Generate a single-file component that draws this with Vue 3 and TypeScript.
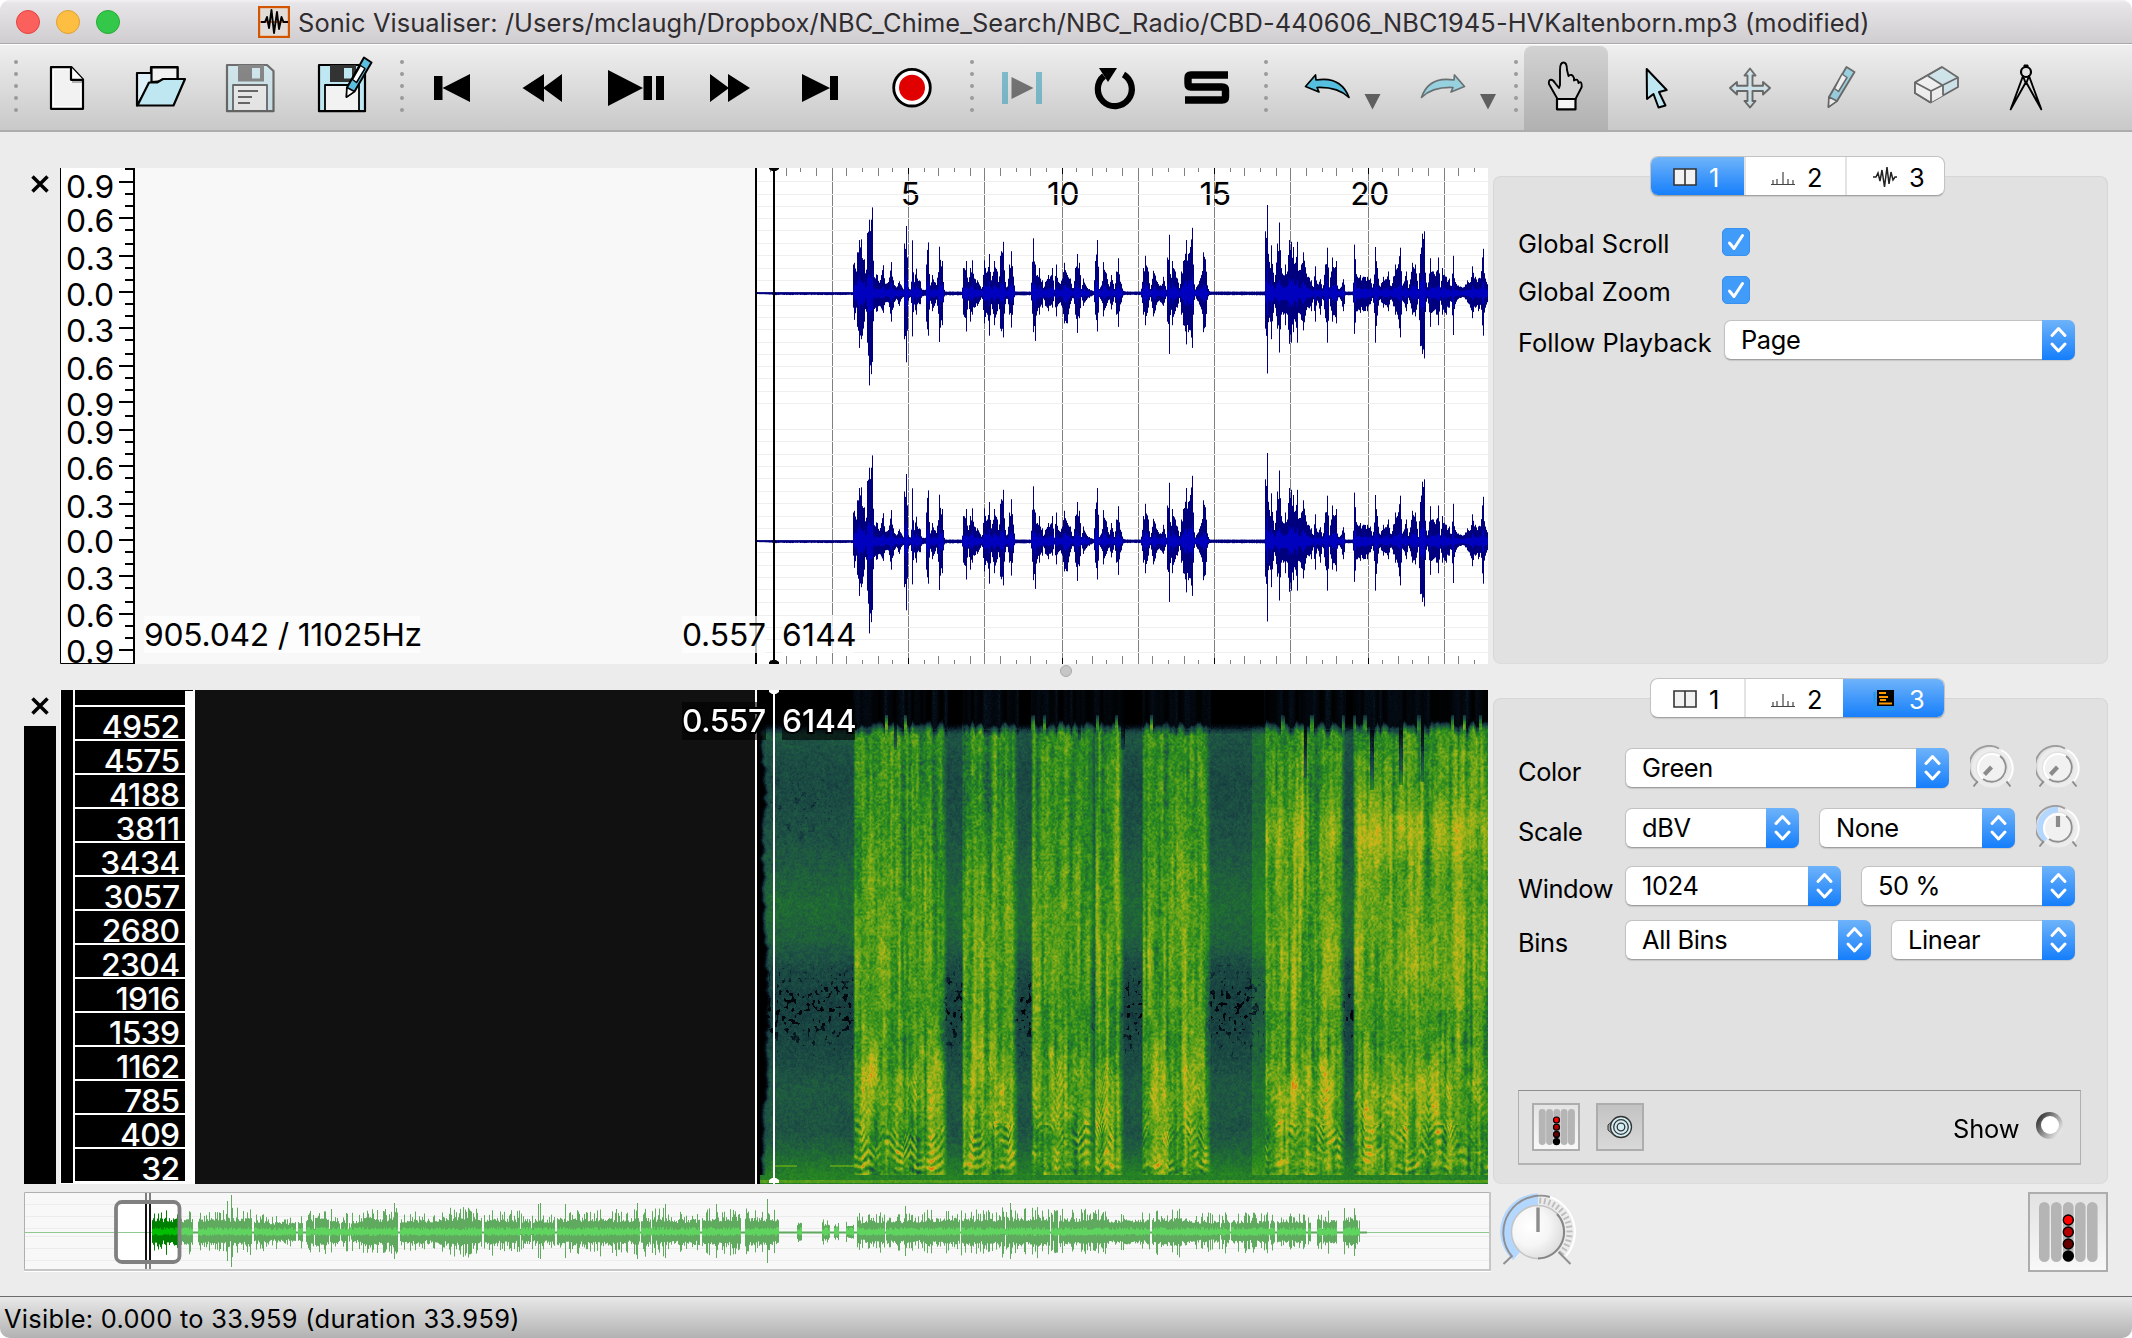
<script setup lang="ts">
import { onMounted, ref } from 'vue'

interface Shape { d: string; fill?: string; stroke?: string; w?: number }
interface Tool { id: string; x: number; w: number; active?: boolean; dim?: boolean; shapes: Shape[] }

function rng(seed: number) {
  let s = seed >>> 0
  return () => {
    s = (s + 0x6d2b79f5) >>> 0
    let t = s
    t = Math.imul(t ^ (t >>> 15), t | 1)
    t ^= t + Math.imul(t ^ (t >>> 7), t | 61)
    return ((t ^ (t >>> 14)) >>> 0) / 4294967296
  }
}

const dots = (x: number): Shape => ({
  d: [62, 74, 86, 98, 110].map(y => `M${x - 2} ${y}a2 2 0 1 0 4 0a2 2 0 1 0 -4 0`).join(''),
  fill: '#9a9a9a',
})
const K = '#000'
const tri = (x: number): Shape => ({ d: `M${x} 94h16l-8 15.5z`, fill: '#5f5f5f' })

const tools: Tool[] = [
  { id: 'grip1', x: 0, w: 32, shapes: [dots(16)] },
  { id: 'new', x: 32, w: 84, shapes: [
    { d: 'M51 67.2H71.5L83 79.5V108.8H51z', fill: '#fff', stroke: K, w: 2.2 },
    { d: 'M54 70H70V82H80V106H54z', fill: '#f2f2f2' },
    { d: 'M71 67V79.8H83', fill: '#fff', stroke: K, w: 2.2 },
    { d: 'M72 82h10', stroke: '#999', w: 1.5 } ] },
  { id: 'open', x: 116, w: 88, shapes: [
    { d: 'M137 105.5V73H151V67H177.5V80L160 84L145 92z', fill: '#dff1f8', stroke: K, w: 2.2 },
    { d: 'M151.5 82V67.4H177.5V80z', fill: '#f2f2f2', stroke: K, w: 2.2 },
    { d: 'M137.5 105.5L149 82.5H157L163 79H185L173.5 105.5z', fill: '#bfe7f2', stroke: K, w: 2.2 } ] },
  { id: 'save', x: 204, w: 92, dim: true, shapes: [
    { d: 'M227 65H267L273.5 71V111.2H227z', fill: '#bfe7f2', stroke: K, w: 2.2 },
    { d: 'M238 65H264V81.5H238z', fill: '#333' },
    { d: 'M252 68H260V78.5H252z', fill: '#bfe7f2' },
    { d: 'M233 111V85H267V111z', fill: '#f2f2f2', stroke: K, w: 1.8 },
    { d: 'M238 91H258M238 97H252M238 103H250', stroke: K, w: 2 } ] },
  { id: 'saveas', x: 296, w: 90, shapes: [
    { d: 'M319 65H365V111.2H319z', fill: '#bfe7f2', stroke: K, w: 2.2 },
    { d: 'M330 65H356V82H330z', fill: '#333' },
    { d: 'M344 68H352V78.5H344z', fill: '#bfe7f2' },
    { d: 'M325 111V85H359V111z', fill: '#f2f2f2', stroke: K, w: 1.8 },
    { d: 'M364 57.5L371.5 62.5L354.5 91.5L346.5 97L347 87.5z', fill: '#5bc0de', stroke: K, w: 2 },
    { d: 'M347 87.5L354.5 91.5L346.5 97z', fill: '#fff', stroke: K, w: 1.5 },
    { d: 'M360.5 65.5L365 68.5L356.5 82.5L352.5 79.5z', fill: '#fff', stroke: K, w: 1.5 } ] },
  { id: 'grip2', x: 386, w: 20, shapes: [dots(402)] },
  { id: 'start', x: 406, w: 90, shapes: [{ d: 'M434 76h8.5v24h-8.5zM470 74V102L442.5 88z', fill: K }] },
  { id: 'rew', x: 496, w: 92, shapes: [{ d: 'M544 74V102L522.5 88zM562 74V102L543 88z', fill: K }] },
  { id: 'play', x: 588, w: 98, shapes: [{ d: 'M608 70V106L643 88zM643.5 76h8.5v24h-8.5zM656 76h8v24h-8z', fill: K }] },
  { id: 'ffwd', x: 686, w: 90, shapes: [{ d: 'M710 74V102L729 88zM728 74V102L750 88z', fill: K }] },
  { id: 'end', x: 776, w: 90, shapes: [{ d: 'M802 74V102L830 88zM830 76h8v24h-8z', fill: K }] },
  { id: 'record', x: 866, w: 90, shapes: [
    { d: 'M893.7 87.7a18.3 18.3 0 1 0 36.6 0a18.3 18.3 0 1 0 -36.6 0', fill: '#fff', stroke: K, w: 2.8 },
    { d: 'M899 87.7a13 13 0 1 0 26 0a13 13 0 1 0 -26 0', fill: '#e10000' } ] },
  { id: 'grip3', x: 956, w: 24, shapes: [dots(972)] },
  { id: 'playsel', x: 980, w: 86, dim: true, shapes: [
    { d: 'M1002 72h6v32h-6zM1036 72h6v32h-6z', fill: '#2596b4' },
    { d: 'M1011.5 77V99L1033.5 88z', fill: '#111' } ] },
  { id: 'loop', x: 1066, w: 96, shapes: [
    { d: 'M1104 76A17 17 0 1 0 1123.5 74.5', stroke: K, w: 6.2 },
    { d: 'M1099 68H1117L1108 82z', fill: K } ] },
  { id: 'solo', x: 1162, w: 88, shapes: [
    { d: 'M1228 75H1191Q1188 75 1188 78V83.5Q1188 87 1191 87H1222Q1225.500 87 1225.500 90V97Q1225.500 100 1222 100H1185', stroke: K, w: 7.4 } ] },
  { id: 'grip4', x: 1250, w: 24, shapes: [dots(1266)] },
  { id: 'undo', x: 1274, w: 124, shapes: [
    { d: 'M1305.500 86.500L1315.500 75L1316 80C1334 77 1344 84 1349 97.500C1340 89 1330 87 1317 87.500L1319 92z', fill: '#56bfdf', stroke: K, w: 1.7 }, tri(1364.5) ] },
  { id: 'redo', x: 1398, w: 102, shapes: [
    { d: 'M1464.500 86.500L1454.500 75L1454 80C1436 77 1426 84 1421.500 97.500C1430 89 1440 87 1453 87.500L1451 92z', fill: '#97d0df', stroke: '#6a7173', w: 1.7 }, tri(1480) ] },
  { id: 'grip5', x: 1500, w: 24, shapes: [dots(1516)] },
  { id: 'navigate', x: 1524, w: 84, active: true, shapes: [
    { d: 'M1560 85V70C1560 60 1567 60 1567 70L1568.500 76Q1572 73 1574 78V80.500Q1578 78 1578.500 83Q1582 80 1581.700 87L1575.500 99H1557.500L1549 84C1548 78.500 1552.500 78.500 1555 83L1559 88z', fill: '#d3d3d3', stroke: K, w: 1.9 },
    { d: 'M1557 99H1575.500V109.300H1557z', fill: '#f4f4f4', stroke: K, w: 2.2 } ] },
  { id: 'select', x: 1608, w: 94, shapes: [
    { d: 'M1646.700 69L1666.700 90L1659 92L1665.500 105.500L1658.500 107.500L1653.500 94L1647 99z', fill: '#bfe7f2', stroke: K, w: 2 } ] },
  { id: 'move', x: 1702, w: 94, dim: true, shapes: [
    { d: 'M1750 68.500L1755.500 75.500H1752.500V85.700H1763V82L1770 88L1763 94.500V91H1752.500V101H1755.500L1750 107.500L1744.500 101H1747.500V91H1737V94.500L1730 88L1737 82V85.700H1747.500V75.500H1744.500z', fill: '#bfe7f2', stroke: K, w: 1.9 } ] },
  { id: 'draw', x: 1796, w: 92, dim: true, shapes: [
    { d: 'M1846.500 67L1854.500 72L1837 101L1828.500 107L1829 97z', fill: '#5bc0de', stroke: K, w: 1.9 },
    { d: 'M1829 97L1837 101L1828.500 107z', fill: '#fff', stroke: K, w: 1.5 },
    { d: 'M1842 74L1847 77.500L1838.500 91.500L1834.500 88.500z', fill: '#fff', stroke: K, w: 1.5 } ] },
  { id: 'erase', x: 1888, w: 94, dim: true, shapes: [
    { d: 'M1942 67L1958 77.500V87L1930.500 102.500L1915 93V82.500z', fill: '#bfe7f2', stroke: K, w: 1.8 },
    { d: 'M1915 82.500L1928 76L1943 85.500V95.500L1930.500 102.500L1915 93z', fill: '#fff' },
    { d: 'M1915 82.500L1931 91L1958 77.500M1931 91V102.500M1928 76L1943 85.500V95.500M1942 67L1915 82.500V93L1930.500 102.500', stroke: K, w: 1.8 } ] },
  { id: 'measure', x: 1982, w: 150, shapes: [
    { d: 'M2024 65h4v4h-4z', fill: K, stroke: K, w: 1 },
    { d: 'M2021 72a5 5 0 1 0 10 0a5 5 0 1 0 -10 0', fill: '#e3e3e3', stroke: K, w: 2.2 },
    { d: 'M2023 76L2010.700 109.300L2026 82L2041.300 109.300L2029 76L2026 84z', fill: '#ddd', stroke: K, w: 1.9 } ] },
]

/* waveform envelope: position, positive peak, negative peak */
const envA: number[][] = [
  [290,1,1],[335,1,3],[345,1,4],[578,1,4],[580,80,40],[583,85,75],[588,60,40],[592,115,95],[597,150,155],[602,152,130],[607,98,120],[612,95,80],[617,40,30],[622,170,140],[627,208,262],[632,208,230],[637,243,195],[640,60,60],[650,50,50],[658,28,35],[668,78,55],[675,25,25],[683,30,25],[692,87,80],[698,35,40],[708,15,15],[716,32,35],[724,20,15],[731,10,12],[733,140,130],[739,190,196],[743,15,20],[752,10,10],[757,149,122],[760,20,25],[767,68,60],[772,40,30],[780,32,30],[784,8,8],[795,8,6],[797,80,80],[800,120,100],[805,143,120],[808,10,10],[815,50,50],[822,30,35],[830,30,20],[838,131,138],[845,90,90],[849,30,25],[853,3,5],[905,3,5],[910,70,60],[918,90,108],[924,30,20],[930,70,80],[937,92,60],[943,40,40],[952,35,35],[965,8,8],[972,92,85],[980,60,60],[988,110,120],[993,35,30],[1002,90,90],[1010,60,50],[1015,30,30],[1020,105,100],[1028,145,125],[1034,30,30],[1040,10,10],[1047,80,60],[1054,118,97],[1061,20,10],[1064,3,5],[1112,3,5],[1115,80,50],[1120,155,110],[1124,80,135],[1130,50,50],[1137,70,60],[1145,35,40],[1150,10,10],[1155,30,35],[1165,50,50],[1175,70,40],[1182,8,8],[1187,80,65],[1195,30,30],[1205,40,40],[1211,85,85],[1220,50,85],[1230,40,30],
]
const envB: number[][] = [
  [8,5,8],[15,70,60],[20,110,112],[28,85,70],[33,10,10],[40,40,35],[46,20,20],[56,10,12],[70,4,4],[75,90,60],[82,150,108],[86,10,10],[94,20,20],[100,87,65],[108,55,35],[116,15,15],[124,50,45],[132,10,10],[138,60,60],[143,98,95],[152,25,25],[158,5,5],[170,3,4],[212,3,4],[220,70,60],[226,105,90],[234,60,40],[240,10,10],[250,62,65],[262,30,25],[275,20,30],[280,45,35],[288,8,8],[292,100,80],[297,165,172],[301,20,30],[305,90,90],[314,60,50],[322,40,40],[328,8,8],[333,60,60],[340,90,90],[347,150,145],[355,110,110],[360,130,105],[365,185,155],[369,80,60],[373,10,8],[382,20,20],[392,50,45],[400,115,110],[406,95,95],[412,15,10],[418,3,4],[583,3,5],[586,175,100],[590,250,228],[595,110,70],[600,70,80],[604,135,130],[612,30,30],[622,140,100],[628,200,168],[633,70,60],[640,50,60],[645,80,90],[651,60,60],[656,150,143],[662,145,140],[668,130,110],[675,85,80],[680,145,140],[685,60,50],[692,80,75],[700,115,105],[706,70,60],[715,45,40],[724,35,50],[728,10,10],[734,75,80],[741,25,20],[750,38,60],[757,10,10],[765,80,70],[771,128,140],[777,15,15],[785,100,80],[797,90,85],[801,20,20],[806,8,8],[820,38,50],[825,3,5],[848,3,5],[853,137,115],[860,45,50],[870,50,55],[880,45,50],[890,45,50],[900,40,30],[908,10,10],[916,130,140],[922,70,60],[928,15,15],[940,45,40],[955,60,50],[962,15,15],[976,80,60],[982,70,60],[989,128,125],[996,20,20],[1007,60,50],[1015,10,10],[1025,85,60],[1036,80,65],[1044,10,15],[1050,110,150],[1056,168,172],[1061,175,185],[1066,50,40],[1072,10,10],[1080,98,95],[1088,60,50],[1097,60,60],[1105,100,90],[1110,15,20],[1117,70,60],[1127,45,60],[1138,40,40],[1142,10,15],[1148,105,118],[1154,30,30],[1165,20,15],[1180,15,10],[1190,35,25],[1200,30,40],[1207,75,70],[1215,45,40],[1225,40,50],[1232,60,40],[1238,125,120],[1244,40,40],[1257,28,30],
]
const env = [...envA, ...envB.map(([x, u, d]) => [x + 1230, u, d])].map(([x, u, d]) => [660 + x / 3, u * 0.35, d * 0.35])

function buildWave() {
  const r = rng(7)
  let outer = ''
  let inner = ''
  let i = 0
  for (let x = 757; x < 1488; x++) {
    while (i < env.length - 2 && env[i + 1][0] < x) i++
    const [x0, u0, d0] = env[i]
    const [x1, u1, d1] = env[i + 1]
    const t = Math.min(1, Math.max(0, (x - x0) / (x1 - x0)))
    const j = 0.7 + r() * 0.3
    let u = (u0 + (u1 - u0) * t) * j
    let d = (d0 + (d1 - d0) * t) * j
    for (const e of env) {
      if (Math.round(e[0]) === x) {
        u = Math.max(u, e[1])
        d = Math.max(d, e[2])
      }
    }
    outer += `M${x + .5} ${(293 - u - .5).toFixed(1)}V${(293 + d + .7).toFixed(1)}`
    if (u > 3) {
      const k = .16 + r() * .14
      inner += `M${x + .5} ${(293 - Math.min(u * k, 22) - 1).toFixed(1)}V${(293 + Math.min(d * k, 22) + 1.5).toFixed(1)}`
    }
  }
  return { outer, inner }
}
const wave = buildWave()

const grid = Array.from({ length: 48 }, (_, k) => ({ k, x: 2 * Math.floor((756 + 15.3 * k) / 2) + .5 })).filter(g => g.k > 0)
const majors = grid.filter(g => g.k % 5 === 0)
const minorPath = grid.filter(g => g.k % 5 !== 0).map(g => {
  const h = g.k % 2 ? 4 : 8
  return `M${g.x} 168v${h}M${g.x} 664v${-h}`
}).join('')
const hlines = [93,129,166,202,238,276,312,350,386,458,493,531,567,604,640,676,714,749,826,862,900,936,971,1010,1045,1083,1119,1190,1227,1264,1300,1338,1375,1410,1448,1484]
  .map(v => Math.round(150 + v * .338) + .5)
const seconds = [{ t: '5', x: 910 }, { t: '10', x: 1063 }, { t: '15', x: 1215 }, { t: '20', x: 1369.500 }]

const bigTicks = [95,201,314,420,527,639,746,828,935,1047,1154,1260,1373,1479].map(v => Math.round(150 + v * .338))
const smallTicks = [56,130,166,237,278,349,385,456,491,562,604,675,710,787,863,899,970,1012,1083,1118,1189,1225,1296,1337,1408,1444].map(v => Math.round(150 + v * .338))
const ampText = ['0.9','0.6','0.3','0.0','0.3','0.6','0.9','0.9','0.6','0.3','0.0','0.3','0.6','0.9']
const ampY = [198, 232, 269.500, 306, 341.500, 379.500, 415.500, 443.500, 479.500, 517.500, 553, 589.500, 627, 662.500]
const amps = ampText.map((t, i) => ({ t, y: ampY[i] }))
const freqs = [4952,4575,4188,3811,3434,3057,2680,2304,1916,1539,1162,785,409,32]

/* overview */
function buildOverview() {
  const r = rng(21)
  const out = { light: '', lightIn: '', dark: '', darkIn: '' }
  const segs = [[152,178,26],[178,192.500,25],[198,225,26],[225,252,27],[254,268,23],[268,296,19],[298,303,20],[306,333,26],[333,360,22],[360,398,27],[400,440,24],[440,482,28],[484,520,26],[520,555,24],[557,600,26],[600,640,26],[641,670,27],[670,700,24],[702,741,28],[745,779,27],[797,802,17],[822,830,15],[834,839,12],[846,854,15],[857,885,22],[886,920,22],[920,960,26],[961,1000,26],[1000,1050,28],[1051,1100,27],[1100,1150,24],[1152,1190,26],[1190,1230,22],[1231,1275,22],[1277,1306,23],[1308,1311,22],[1317,1337,24],[1343,1360,27]]
  const spikes: Record<number, number> = { 231: 37, 227: 31, 394: 29, 538: 28, 540: 29, 565: 28, 637: 29, 665: 28, 716: 28, 767: 33, 905: 26, 1010: 29 }
  for (const [a, b, amp] of segs) {
    for (let x = Math.ceil(a); x < b; x++) {
      const q = r()
      let u = amp * (q < .3 ? .82 : .5) * (.75 + r() * .35)
      let d = u * (.85 + r() * .25)
      if (q > .985) { u = 3; d = 3 }
      if (spikes[x]) { u = spikes[x]; d = u - 2 }
      const p = `M${x + .5} ${(1232 - u).toFixed(1)}V${(1232 + d).toFixed(1)}`
      const pi = `M${x + .5} ${(1232 - 2 - r() * 3).toFixed(1)}V${(1232 + 2 + r() * 2).toFixed(1)}`
      if (x < 178) { out.dark += p; out.darkIn += pi } else { out.light += p; out.lightIn += pi }
    }
  }
  return out
}
const over = buildOverview()

/* spectrogram */
const cv = ref<HTMLCanvasElement | null>(null)
const stops: [number, number, number, number][] = [
  [0, 0, 0, 0], [.1, 4, 12, 22], [.2, 20, 56, 62], [.32, 30, 84, 68], [.42, 32, 112, 48], [.52, 40, 138, 30],
  [.64, 92, 160, 26], [.76, 150, 176, 24], [.88, 204, 184, 26], [1, 230, 120, 16],
]
function colour(v: number): [number, number, number] {
  v = Math.min(.999, Math.max(0, v))
  let i = 0
  while (stops[i + 1][0] < v) i++
  const a = stops[i]
  const b = stops[i + 1]
  const t = (v - a[0]) / (b[0] - a[0])
  return [a[1] + (b[1] - a[1]) * t, a[2] + (b[2] - a[2]) * t, a[3] + (b[3] - a[3]) * t]
}
function lerpTable(tab: number[][], y: number) {
  let i = 0
  while (i < tab.length - 2 && tab[i + 1][0] < y) i++
  const t = Math.min(1, Math.max(0, (y - tab[i][0]) / (tab[i + 1][0] - tab[i][0])))
  return tab[i][1] + (tab[i + 1][1] - tab[i][1]) * t
}
function makeNoise(seed: number, w: number, h: number, sx: number, sy: number) {
  const r = rng(seed)
  const gw = Math.ceil(w / sx) + 2
  const gh = Math.ceil(h / sy) + 2
  const g = Float32Array.from({ length: gw * gh }, () => r() * 2 - 1)
  return (x: number, y: number) => {
    const fx = x / sx
    const fy = y / sy
    const ix = Math.floor(fx)
    const iy = Math.floor(fy)
    const tx = fx - ix
    const ty = fy - iy
    const a = g[iy * gw + ix] * (1 - tx) + g[iy * gw + ix + 1] * tx
    const b = g[(iy + 1) * gw + ix] * (1 - tx) + g[(iy + 1) * gw + ix + 1] * tx
    return a * (1 - ty) + b * ty
  }
}
onMounted(() => {
  const c = cv.value
  const ctx = c?.getContext('2d')
  if (!c || !ctx) return
  const W = 732
  const H = 494
  const img = ctx.createImageData(W, H)
  const fine = makeNoise(1, W, H, 1.6, 2)
  const med = makeNoise(2, W, H, 4, 6)
  const tall = makeNoise(3, W, H, 2.6, 90)
  const tall2 = makeNoise(4, W, H, 7, 160)
  const wob = makeNoise(5, W, 2, 7, 1)
  const speck = makeNoise(6, W, H, 2.6, 3.2)
  const blob = makeNoise(12, W, H, 6, 14)
  const spike = makeNoise(8, W, 2, 3, 1)
  const px = rng(9)
  const toX = (d: number) => 670 + d * .5293 - 756
  const segs = [[348,518],[553,652],[684,796],[803,852],[893,1016],[1125,1270],[1292,1700]].map(s => s.map(toX))
  const speech = [[0,.52],[60,.52],[120,.53],[180,.58],[260,.61],[320,.56],[350,.57],[390,.66],[425,.64],[450,.58],[470,.64],[484,.56],[494,.5]]
  const quiet = [[0,.33],[50,.31],[90,.27],[150,.31],[215,.39],[250,.36],[280,.27],[320,.23],[360,.27],[400,.33],[440,.31],[462,.38],[484,.48],[494,.5]]
  const loudSpikes = [408,444,685,706,806,842,909,1157,1212,1272,1293,1312,1414,1477,1500,1530].map(toX)
  const darkSpikes = [[425,60],[773,50],[1200,88],[1325,100],[1380,95],[1421,92],[855,60]].map(([x, h]) => [toX(x), h])
  const hot = [[380,1205,5,45],[510,1230,4,40],[1175,1250,6,20],[1242,1240,4,25],[1422,1240,4,30],[625,1240,5,35],[1445,1255,5,20]].map(([x, y, a, b]) => [toX(x), (y - 30) / 3, a, b])
  for (let x = 0; x < W; x++) {
    let s = 0
    for (const [a, b] of segs) {
      if (x >= a - 1.5 && x <= b + 3) s = Math.max(s, Math.min(1, (x - a + 1.5) / 2, (b + 3 - x) / 6))
    }
    const late = x > toX(1122)
    const pre = x > toX(1098) && x < toX(1125) ? .1 : 0
    for (let y = 0; y < H; y++) {
      const colNoise = tall(x, y) * .15 + tall2(x, y) * .1
      let q = lerpTable(quiet, y) + med(x, y) * .02 + fine(x, y) * .045 + pre
      const sp = speck(x, y)
      const deep = Math.exp(-(((y - 320) / 45) ** 2)) + .45 * Math.exp(-(((y - 120) / 45) ** 2)) * (x < 85 ? 1 : .3)
      if (sp < -.72 + deep * .32) q -= .18 * deep
      let v = lerpTable(speech, y) + colNoise + med(x, y) * .05 + fine(x, y) * .1
      if (late) v += (.1 + tall2(x, y) * .09) * Math.exp(-(((y - 140) / 28) ** 2)) + (y > 60 && y < 320 ? .04 : 0)
      if (y > 340) {
        const h = H - y
        const sp2 = 9.5 + wob(x, 0) * (h < 60 ? 2.4 : 1.5)
        const fall = h < 60 ? .15 : .09
        v += Math.cos((2 * Math.PI * h) / sp2) * fall * Math.min(1, (y - 340) / 90) * (.45 + Math.max(-.4, blob(x, y)))
        v += blob(x, y) * .08
        for (const [hx, hy, a, b] of hot) v += .16 * Math.exp(-(((x - hx) / a) ** 2) - ((y - hy) / b) ** 2)
      }
      v = q * (1 - s) + v * s
      const edge = 42 + (s > 0 ? spike(x, 0) * 5 : 0)
      let top = Math.min(1, Math.max(0, (y - edge + 9) / 11))
      for (const lx of loudSpikes) if (Math.abs(x - lx) < 1.6 && y > 24) top = Math.max(top, Math.min(.95, (y - 22) / 14))
      for (const [dx, dh] of darkSpikes) if (Math.abs(x - dx) < 1.8 && y < dh) v *= .15 + .6 * (y / dh) ** 3
      v *= top
      if (y < 40 && s > 0) v += .05 + spike(x, 0) * .06
      if (x < 16) {
        const lim = 3 + 7 * Math.exp(-(((y - 320) / 130) ** 2)) + 4 * Math.exp(-(((y - 100) / 40) ** 2)) + med(0, y) * 2
        v *= Math.min(1, Math.max(0, (x - lim + 1) / 5))
      }
      if (y > 484 && x > 3) v = .48 + fine(x, y) * .04 + (y > 489 && y < 493 ? .14 : 0)
      if ((y === 475 || y === 476) && ((x > 18 && x < 41) || (x > 73 && x < 98))) v = .62
      v += (px() - .5) * .05 * (v > .05 ? 1 : 0)
      const [r, g, b] = colour(v)
      const o = (y * W + x) * 4
      img.data[o] = r
      img.data[o + 1] = g
      img.data[o + 2] = b
      img.data[o + 3] = 255
    }
  }
  ctx.putImageData(img, 0, 0)
})

interface Sel { t: string; w: number; ml?: number }
const rows: { label: string; mt: number; off: number; sel: Sel[]; dials: { a: number; ml: number }[] }[] = [
  { label: 'Color', mt: 49, off: 6, sel: [{ t: 'Green', w: 324 }], dials: [{ a: -138, ml: 21 }, { a: -138, ml: 22 }] },
  { label: 'Scale', mt: 20, off: 6, sel: [{ t: 'dBV', w: 174 }, { t: 'None', w: 196, ml: 20 }], dials: [{ a: 0, ml: 21 }] },
  { label: 'Window', mt: 18, off: 4, sel: [{ t: '1024', w: 216 }, { t: '50 %', w: 214, ml: 20 }], dials: [] },
  { label: 'Bins', mt: 14, off: 4, sel: [{ t: 'All Bins', w: 246 }, { t: 'Linear', w: 184, ml: 20 }], dials: [] },
]
const dialTicks = Array.from({ length: 16 }, (_, i) => {
  const a = ((4 + i * 8.5) * Math.PI) / 180
  return `M${38 + Math.sin(a) * 28.5} ${40 - Math.cos(a) * 28.5}L${38 + Math.sin(a) * 34.5} ${40 - Math.cos(a) * 34.5}`
}).join('')
const leds = ['#ff0000', '#b40000', '#640000', '#000']
</script>

<template>
  <div class="window">
    <header class="titlebar">
      <i class="light red" /><i class="light amber" /><i class="light green" />
      <svg class="appicon" width="32" height="32" viewBox="0 0 32 32">
        <rect x="1" y="1" width="30" height="30" fill="#e2dcd8" stroke="#d45500" stroke-width="2.400" />
        <path d="M2 16H30" stroke="#d45500" stroke-width="1.500" />
        <path d="M3 16H7L9 11L11 22L13.500 4L16 27L19 6L21 23L23.500 11L25.500 16H30" fill="none" stroke="#000" stroke-width="1.900" stroke-linejoin="round" />
      </svg>
      <span class="title">Sonic Visualiser: /Users/mclaugh/Dropbox/NBC_Chime_Search/NBC_Radio/CBD-440606_NBC1945-HVKaltenborn.mp3 (modified)</span>
    </header>

    <nav class="toolbar">
      <span v-for="t in tools" :key="t.id" class="tool" :class="{ active: t.active }">
        <svg :width="t.w" height="84" :viewBox="`${t.x} 46 ${t.w} 84`" :opacity="t.dim ? .52 : 1">
          <path v-for="(s, i) in t.shapes" :key="i" :d="s.d" :fill="s.fill || 'none'" :stroke="s.stroke || 'none'" :stroke-width="s.w || 0" stroke-linejoin="round" />
        </svg>
      </span>
    </nav>

    <main>
      <section class="row row1">
        <div class="side">
          <svg class="close" width="18" height="18" viewBox="0 0 18 18"><path d="M1.500 1.500L16.500 16.500M16.500 1.500L1.500 16.500" stroke="#000" stroke-width="3.500" /></svg>
        </div>
        <svg class="pane" width="1428" height="496" viewBox="60 168 1428 496">
          <rect x="60" y="168" width="1428" height="496" fill="#fff" />
          <rect x="135" y="168" width="620" height="496" fill="#f8f8f8" />
          <path d="M60.500 168V663.500H134" fill="none" stroke="#000" />
          <path d="M134 168V664" stroke="#000" stroke-width="2" />
          <path :d="bigTicks.map(y => `M119 ${y}H134`).join('') + smallTicks.map(y => `M125 ${y}H134`).join('')" stroke="#000" stroke-width="2" />
          <text v-for="(a, i) in amps" :key="i" x="66" :y="a.y" class="num" textLength="47.500">{{ a.t }}</text>
          <path :d="majors.map(g => `M${g.x} 168V664`).join('')" stroke="#808080" />
          <path :d="minorPath" stroke="#808080" />
          <path :d="majors.filter(g => g.k % 10 === 0).map(g => `M${g.x} 168v6M${g.x} 664v-6`).join('')" stroke="#000" />
          <text v-for="s in seconds" :key="s.t" :x="s.x" y="205" class="num" text-anchor="middle">{{ s.t }}</text>
          <path :d="hlines.map(y => `M757 ${y}H1488`).join('')" stroke="#efefef" />
          <g v-for="o in [0, 248]" :key="o" :transform="`translate(0 ${o})`">
            <path d="M757 292.500H1488" stroke="#8484c4" />
            <path :d="wave.outer" stroke="#00007f" />
            <path :d="wave.inner" stroke="#0000bf" />
          </g>
          <path d="M756 168V664M774 168V664" stroke="#000" stroke-width="2" />
          <path d="M769 168h10v1l-3 2h-4l-3-2zM769 664h10v-2l-3-2h-4l-3 2z" fill="#000" />
          <g fill="#fff" fill-opacity=".75">
            <rect x="144" y="616" width="276" height="37" />
            <rect x="682" y="616" width="84" height="37" />
            <rect x="782" y="616" width="72" height="37" />
          </g>
          <text x="144" y="646" class="num" textLength="277.500">905.042 / 11025Hz</text>
          <text x="682" y="646" class="num" textLength="83.500">0.557</text>
          <text x="782" y="646" class="num" textLength="74">6144</text>
        </svg>
        <aside class="panel">
          <div class="tabs">
            <span class="tab on t1"><svg width="24" height="18"><path d="M1 1H23V17H1zM12 1V17" fill="#f2f2f2" stroke="#333" stroke-width="1.600" /></svg>1</span>
            <span class="tab t2"><svg width="24" height="18"><path d="M0 16.500H24M2 16V12M6 16V11M12 16V4M17 16V11M22 16V12" stroke="#444" stroke-width="1.200" /></svg>2</span>
            <span class="tab t3"><svg width="24" height="22"><path d="M0 11H3L5 7L7 15L9 4L11.500 21L14 1L16 18L18 6L20 14L22 11H24" fill="none" stroke="#222" stroke-width="1.500" /></svg>3</span>
          </div>
          <div class="group">
            <div class="frow chk first"><label>Global Scroll</label><i class="box"><svg width="28" height="28"><path d="M7.500 15L12 20.500L20.500 7.500" fill="none" stroke="#fff" stroke-width="3" stroke-linecap="round" stroke-linejoin="round" /></svg></i></div>
            <div class="frow chk"><label>Global Zoom</label><i class="box"><svg width="28" height="28"><path d="M7.500 15L12 20.500L20.500 7.500" fill="none" stroke="#fff" stroke-width="3" stroke-linecap="round" stroke-linejoin="round" /></svg></i></div>
            <div class="frow chk page"><label>Follow Playback</label>
              <span class="select" style="width: 351px"><b>Page</b><em><svg width="33" height="38"><path d="M10 15.500L16.500 8.500L23 15.500M10 24L16.500 31L23 24" class="chev" /></svg></em></span>
            </div>
          </div>
        </aside>
      </section>

      <div class="splitter"><i /></div>

      <section class="row row2">
        <div class="side">
          <svg class="close" width="18" height="18" viewBox="0 0 18 18"><path d="M1.500 1.500L16.500 16.500M16.500 1.500L1.500 16.500" stroke="#000" stroke-width="3.500" /></svg>
          <div class="meter" />
        </div>
        <svg class="pane" width="135" height="494" viewBox="60 690 135 494">
          <rect x="60" y="690" width="135" height="494" fill="#fff" />
          <rect x="61" y="690" width="12" height="493" fill="#000" />
          <rect x="75" y="690" width="110" height="491" fill="#000" />
          <path d="M185 690.500H193" stroke="#000" />
          <path :d="freqs.map((_, i) => `M75 ${706 + i * 34}H185`).join('')" stroke="#fff" stroke-width="2" />
          <text v-for="(f, i) in freqs" :key="f" x="179.500" :y="738 + i * 34" class="num bold" text-anchor="end">{{ f }}</text>
        </svg>
        <div class="spectro pane">
          <canvas ref="cv" width="732" height="494" />
          <svg width="1293" height="494" viewBox="195 690 1293 494">
            <path d="M756 690V1184" stroke="#fff" stroke-width="2" />
            <path d="M774 690V1184" stroke="#fff" stroke-width="2" />
            <path d="M769 690h10v2l-3 2h-4l-3-2zM769 1183h10v-3l-3-2h-4l-3 2z" fill="#fff" />
            <g fill="#000" fill-opacity=".6">
              <rect x="682" y="702" width="84" height="38" />
              <rect x="782" y="702" width="73" height="38" />
            </g>
            <text x="682" y="732" class="num bold halo" textLength="83.500">0.557</text>
            <text x="782" y="732" class="num bold halo" textLength="74">6144</text>
          </svg>
        </div>
        <aside class="panel">
          <div class="tabs">
            <span class="tab t1"><svg width="24" height="18"><path d="M1 1H23V17H1zM12 1V17" fill="#f2f2f2" stroke="#333" stroke-width="1.600" /></svg>1</span>
            <span class="tab t2"><svg width="24" height="18"><path d="M0 16.500H24M2 16V12M6 16V11M12 16V4M17 16V11M22 16V12" stroke="#444" stroke-width="1.200" /></svg>2</span>
            <span class="tab on t3 wide"><svg width="24" height="22"><path d="M1 21H22M1.500 4V21" stroke="#2497e6" stroke-width="2" /><rect x="4" y="2" width="17" height="16" fill="#000" /><path d="M6 5h7M6 9h9M7 12h6M6 15.500h13" stroke="#f90" stroke-width="1.800" /></svg>3</span>
          </div>
          <div class="group">
            <div v-for="r in rows" :key="r.label" class="frow" :style="{ marginTop: r.mt + 'px' }">
              <label :style="{ paddingTop: r.off + 'px' }">{{ r.label }}</label>
              <span v-for="s in r.sel" :key="s.t" class="select" :style="{ width: s.w + 'px', marginLeft: (s.ml || 0) + 'px' }"><b>{{ s.t }}</b><em><svg width="33" height="38"><path d="M10 15.500L16.500 8.500L23 15.500M10 24L16.500 31L23 24" class="chev" /></svg></em></span>
              <svg v-for="(d, i) in r.dials" :key="i" class="dial" width="44" height="44" viewBox="0 0 44 44" :style="{ marginLeft: d.ml + 'px' }">
                <circle cx="22" cy="22.500" r="18" fill="none" stroke="#ececec" stroke-width="4" />
                <path v-if="d.a === 0" d="M10 35A17.500 17.500 0 0 1 22 4.500" fill="none" stroke="#b3d7ff" stroke-width="6" />
                <path d="M8 37.500A20 20 0 0 1 29 3.500" fill="none" stroke="#9c9c9c" stroke-width="1.900" />
                <path d="M31 5A20 20 0 0 1 38 36" fill="none" stroke="#fff" stroke-width="1.900" />
                <circle cx="22" cy="23" r="14" fill="#f1f1f1" stroke="#fff" stroke-width="2" />
                <path d="M30 11A14 14 0 0 1 13 34" fill="none" stroke="#909090" stroke-width="1.900" />
                <path :d="d.a ? 'M21.500 22L14.500 29.500' : 'M22 11V22'" stroke="#8a8a8a" stroke-width="4.200" />
                <path d="M7.500 36.500L3.500 41.500M36.500 36.500L40.500 41.500" stroke="#8a8a8a" stroke-width="1.900" />
              </svg>
            </div>
            <div class="playbox">
              <span class="pbtn lit"><svg width="44" height="44"><rect v-for="i in 5" :key="i" :x="-2.500 + i * 7.300" y="4" width="6.900" height="36" rx="3.400" fill="#b5b5b5" /><circle v-for="(c, i) in leds" :key="c" cx="22.500" :cy="15 + i * 7.200" r="3" :fill="c" stroke="#000" stroke-width="1.200" /></svg></span>
              <span class="pbtn"><svg width="44" height="44"><path d="M17 14L10 20V25L17 31z" fill="#aaa" stroke="#333" /><g fill="#d3edf5" stroke="#333" stroke-width="1.300"><circle cx="23" cy="22" r="10.500" /><circle cx="23" cy="22" r="7.300" /><circle cx="23" cy="22" r="3.800" /></g></svg></span>
              <span class="show">Show</span><i class="led" />
            </div>
          </div>
        </aside>
      </section>

      <section class="bottom">
        <svg width="1467" height="80" viewBox="24 1192 1467 80">
          <rect x="24" y="1192" width="1467" height="80" fill="#f8f8f8" />
          <path d="M25 1204.500H1490M25 1216.500H1490M25 1228.500H1490M25 1236.500H1490M25 1248.500H1490M25 1260.500H1490" stroke="#ececec" />
          <rect x="117" y="1203" width="62" height="58" fill="#fff" />
          <path d="M25 1232.500H1490" stroke="#8fc98f" />
          <path d="M152 1232.500H1367" stroke="#5faa5f" stroke-width="2" />
          <path :d="over.light" stroke="#5faa5f" /><path :d="over.lightIn" stroke="#5fd55f" />
          <path :d="over.dark" stroke="#008000" /><path :d="over.darkIn" stroke="#00bf00" />
          <path d="M146 1192V1270M150 1192V1270" stroke="#555" stroke-width="1.500" />
          <path d="M146 1203V1261M150 1203V1261" stroke="#000" stroke-width="1.700" />
          <rect x="116" y="1202" width="63.500" height="60" rx="6" fill="none" stroke="#808080" stroke-width="3.800" />
          <path d="M24.500 1272V1192.500H1490" fill="none" stroke="#b0b0b0" />
          <path d="M24 1270H1490V1192" fill="none" stroke="#c6c6c6" stroke-width="2" />
          <path d="M24 1271.500H1491" stroke="#fff" />
        </svg>
        <svg class="bigdial" width="78" height="80" viewBox="0 0 78 80">
          <defs>
            <radialGradient id="knob" cx=".35" cy=".4" r=".65"><stop offset="0" stop-color="#fff" /><stop offset=".55" stop-color="#f6f6f6" /><stop offset="1" stop-color="#dedede" /></radialGradient>
          </defs>
          <path d="M17 63.500A32 32 0 0 1 38 7.500" fill="none" stroke="#b3d7ff" stroke-width="12" />
          <path d="M12 64.500A37 37 0 0 1 50 5" fill="none" stroke="#8f8f8f" stroke-width="1.900" />
          <path d="M50 5A37 37 0 0 1 66 64" fill="none" stroke="#fff" stroke-width="2" />
          <path :d="dialTicks" stroke="#bdbdbd" stroke-width="1.900" />
          <circle cx="38" cy="40" r="26.500" fill="url(#knob)" stroke="#c4c4c4" stroke-width="1.500" />
          <path d="M57 22A26.500 26.500 0 0 1 38 66.500" fill="none" stroke="#858585" stroke-width="2" />
          <path d="M38 15.500V40" stroke="#8c8c8c" stroke-width="3.400" />
          <path d="M12.500 63.500L3.500 72M58.500 60L70.500 72" stroke="#909090" stroke-width="2" />
        </svg>
        <span class="meterbtn"><svg width="76" height="76"><rect v-for="i in 5" :key="i" :x="-3 + i * 12" y="8" width="10.600" height="60" rx="5.300" fill="#b5b5b5" /><circle v-for="(c, i) in leds" :key="c" cx="38.300" :cy="26 + i * 12" r="5" :fill="c" stroke="#000" stroke-width="1.400" /></svg></span>
      </section>
    </main>

    <footer class="status"><span>Visible: 0.000 to 33.959 (duration 33.959)</span></footer>
  </div>
</template>

<style>
body { background: #fff; overflow: hidden; }
</style>

<style scoped>
* { box-sizing: border-box; }
svg, canvas { display: block; flex: none; }
.window { width: 2132px; height: 1338px; background: #ececec; border-radius: 10px; overflow: hidden; display: flex; flex-direction: column; font-family: Inter, "Liberation Sans", sans-serif; font-size: 25.400px; letter-spacing: -.35px; color: #000; }
.titlebar { flex: none; height: 44px; background: linear-gradient(#f4f2f4 0, #e7e5e8 3px, #d1ced2 42px); border-bottom: 1.500px solid #a9a9a9; display: flex; align-items: center; padding-left: 16px; }
.light { width: 24px; height: 24px; border-radius: 50%; margin-right: 16px; border: 1px solid #e0443e; background: #fc605c; }
.amber { background: #fdbe41; border-color: #dea034; }
.green { background: #34c84a; border-color: #27aa35; }
.appicon { margin-left: 122px; }
.title { color: #2f2d30; margin: 2px 0 0 8px; white-space: nowrap; letter-spacing: .095px; }
.toolbar { flex: none; height: 88px; border-top: 1px solid #fff; padding-top: 1px; background: linear-gradient(#efefef, #c9c9c9 84px); border-bottom: 2px solid #adadad; display: flex; }
.tool.active { background: linear-gradient(#d2d2d2, #b1b1b1); border-radius: 8px 8px 0 0; }
main { flex: 1; padding-top: 24px; display: flex; flex-direction: column; }
.row { display: flex; flex: none; }
.row1 { height: 508px; }
.row2 { height: 506px; }
.pane { margin-top: 12px; }
.side { width: 60px; display: flex; flex-direction: column; }
.close { margin: 19px 0 0 31px; }
.meter { width: 32px; height: 458px; background: #000; margin: 11px 0 0 24px; }
.num { font-family: Inter, sans-serif; font-size: 31.800px; letter-spacing: -.6px; fill: #000; }
.bold { fill: #fff; font-weight: 500; }
.halo { paint-order: stroke; stroke: #000; stroke-width: 4px; }
.spectro { display: grid; background: #111; width: 1293px; }
.spectro > * { grid-area: 1 / 1; }
.spectro canvas { margin-left: 561px; }
.panel { width: 615px; margin-left: 5px; display: flex; flex-direction: column; align-items: stretch; }
.tabs { height: 40px; display: flex; align-self: flex-start; margin-left: 157px; border-radius: 8px; background: #fff; border: 1px solid #c3c3c3; border-bottom-color: #a2a2a2; overflow: hidden; z-index: 1; box-shadow: 0 1px 1px rgba(0, 0, 0, .1); }
.tab { display: flex; align-items: center; padding-top: 2px; height: 39px; }
.tab svg { margin-right: 12px; margin-top: -2px; }
.tab + .tab { border-left: 2px solid #e3e3e3; }
.tab.on { color: #fff; background: linear-gradient(#6eb3fa, #157efb); border-color: transparent; }
.t1 { width: 93px; padding-left: 22px; }
.t2 { width: 101px; padding-left: 25px; }
.t3 { width: 99px; padding-left: 26px; }
.tab.wide { width: 101px; margin-left: -2px; padding-left: 30px; border-left: 0; }
.group { flex: 1; margin-top: -20px; background: #e1e1e1; border: 1px solid #d6d6d6; border-bottom-color: #dcdcdc; border-radius: 8px; padding-left: 24px; }
.frow { display: flex; align-items: center; height: 40px; white-space: nowrap; }
.frow label { width: 107px; }
.chk { height: 48px; }
.chk label { width: 204px; padding-top: 3px; letter-spacing: .03px; }
.chk.first { margin-top: 41px; }
.page { margin-top: 2px; }
.page label { width: 206px; padding-top: 5px; }
.box { width: 28px; height: 28px; border-radius: 5px; background: #409bf9; border: 1px solid #3a90ee; }
.box svg { margin: -1px; }
.select { height: 40px; background: #fff; border-radius: 7px; border: 1px solid #c2c2c2; border-bottom-color: #9f9f9f; display: flex; align-items: center; justify-content: space-between; box-shadow: 0 1px 1px rgba(0, 0, 0, .12); }
.select b { font-weight: 400; padding: 0 0 2px 16px; }
.select em { width: 33px; height: 40px; margin: -1px; background: linear-gradient(#6eb3fa, #157efb); border-radius: 0 7px 7px 0; }
.chev { fill: none; stroke: #fff; stroke-width: 3; stroke-linecap: round; stroke-linejoin: round; }
.dial { margin-top: -2px; }
.playbox { width: 563px; height: 75px; margin-top: 130px; border: 1px solid #b0b0b0; border-top-color: #8e8e8e; border-bottom: 2px solid #b3b3b3; display: flex; align-items: center; padding-left: 13px; }
.pbtn { width: 48px; height: 48px; border: 2px solid #adadad; background: linear-gradient(#c3c3c3, #d9d9d9); margin-right: 16px; }
.pbtn.lit { background: linear-gradient(#e4e4e4, #f8f8f8); }
.show { margin: 3px 17px 0 293px; letter-spacing: -.1px; }
.led { width: 27px; height: 27px; border-radius: 50%; padding: 4.500px; background: #fff content-box; background: linear-gradient(#fff, #fff) content-box, linear-gradient(125deg, #111, #8a8a8a 45%, #f4f4f4 90%) border-box; margin-top: -4px; position: relative; }
.led::after { content: ''; display: block; width: 18px; height: 18px; border-radius: 50%; background: #fff; }
.led { background: linear-gradient(125deg, #111, #8a8a8a 45%, #f4f4f4 90%); }
.splitter { height: 14px; padding: 1px 0 0 1060px; }
.splitter i { display: block; width: 12px; height: 12px; border-radius: 50%; background: #c6c6c6; border: 1px solid #aaa; }
.bottom { display: flex; padding: 8px 0 0 24px; }
.bigdial { margin-left: 9px; }
.meterbtn { width: 80px; height: 80px; margin-left: 450px; border: 2px solid #adadad; background: linear-gradient(#e2e2e2, #f8f8f8); }
.status { flex: none; height: 42px; border-top: 1px solid #6d6d6d; background: linear-gradient(#e8e8e8, #b2b2b2); padding: 2px 0 0 4px; display: flex; align-items: center; letter-spacing: .3px; }
</style>
